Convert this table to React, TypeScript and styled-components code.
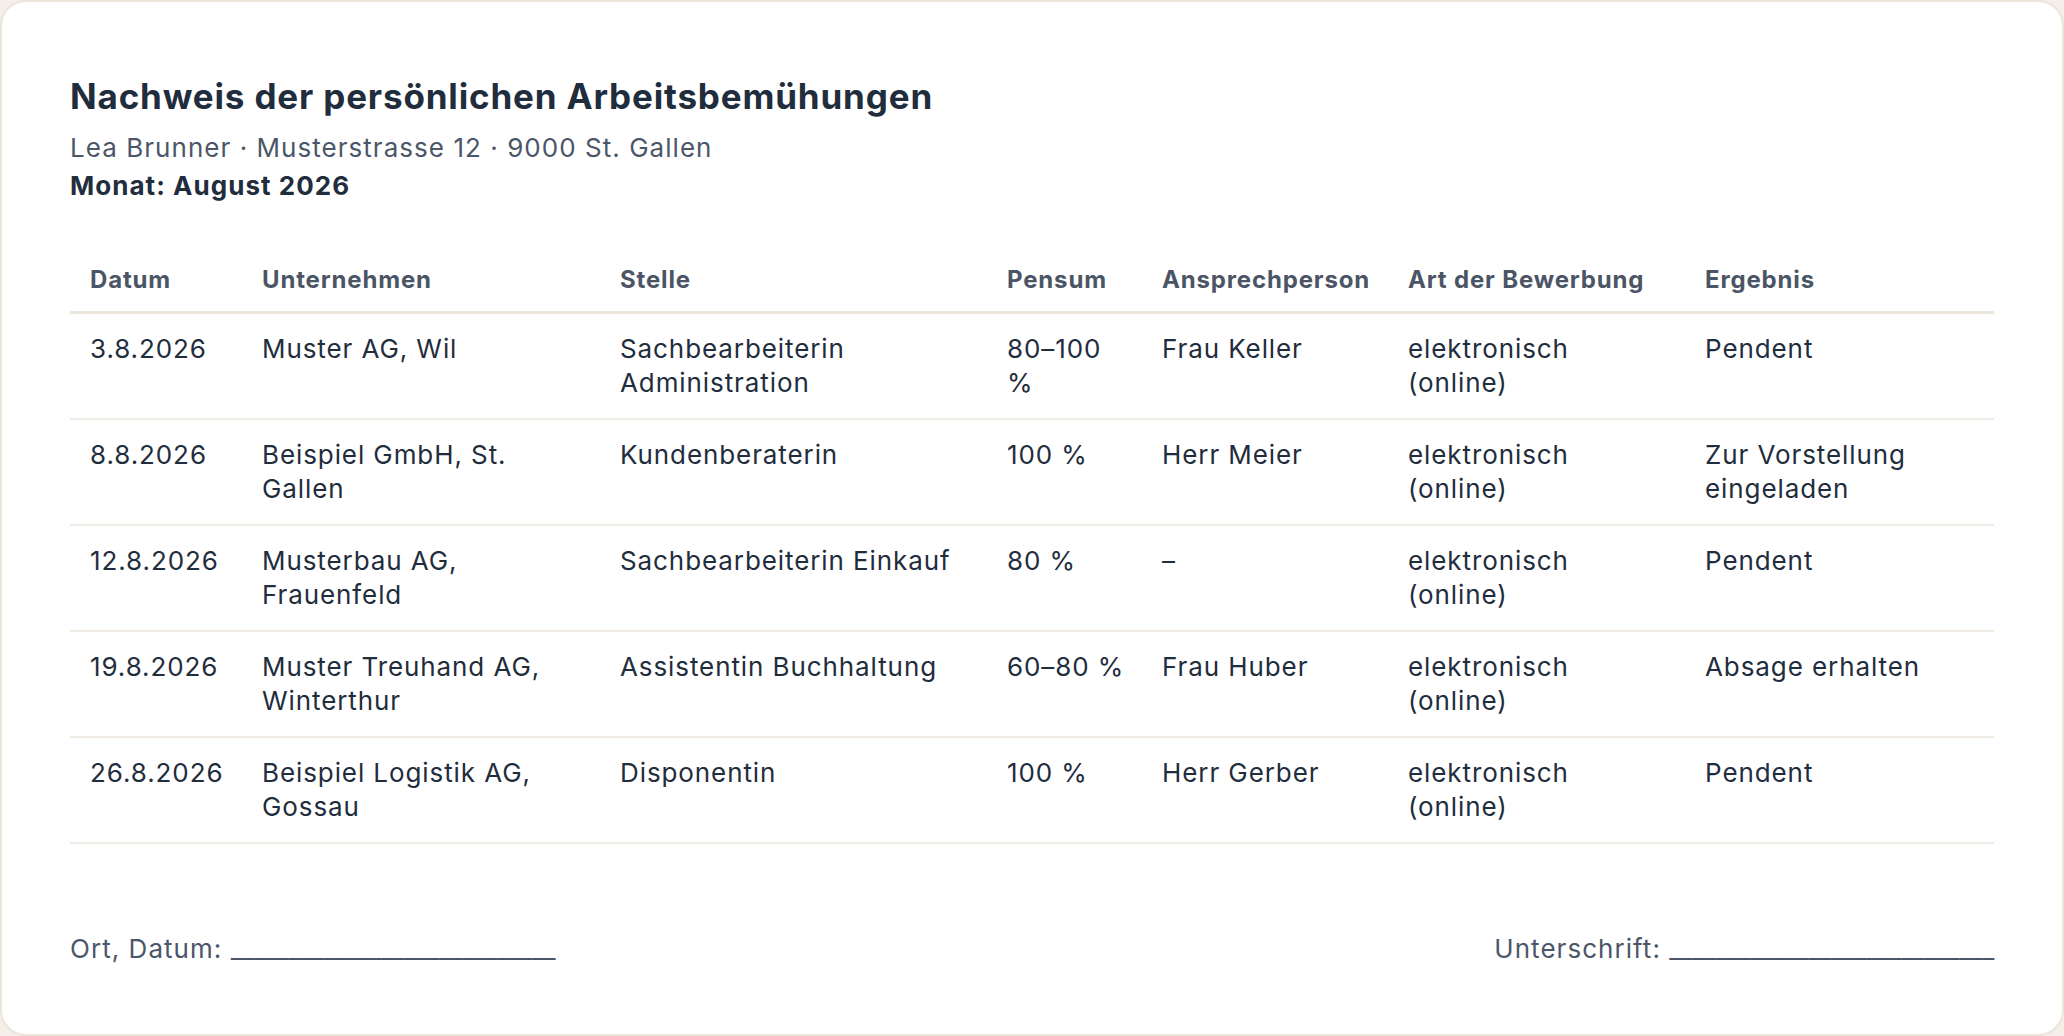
import React from "react";
import styled, { createGlobalStyle } from "styled-components";

const GlobalStyle = createGlobalStyle`
  html, body {
    margin: 0;
    padding: 0;
    background: #f4f0e9;
  }
  body {
    font-family: Inter, "Noto Sans", sans-serif;
    color: #1f2d3d;
    -webkit-font-smoothing: antialiased;
  }
  * { box-sizing: border-box; }
`;

const Card = styled.main`
  height: 1036px;
  background: #ffffff;
  border: 2px solid #ebe5da;
  border-radius: 26px;
  padding: 74px 68px 68px;
  display: flex;
  flex-direction: column;
`;

const Title = styled.h1`
  margin: 0;
  font-size: 35px;
  line-height: 40px;
  font-weight: 700;
  color: #1f2d3d;
  letter-spacing: 0.024em;
`;

const Meta = styled.p<{ $strong?: boolean }>`
  margin: ${(p) => (p.$strong ? "2px 0 0" : "14px 0 0")};
  font-size: 26px;
  line-height: 36px;
  letter-spacing: 0.04em;
  font-weight: ${(p) => (p.$strong ? 700 : 400)};
  color: ${(p) => (p.$strong ? "#1f2d3d" : "#4b5768")};
`;

const Table = styled.table`
  margin-top: 41px;
  width: 100%;
  border-collapse: collapse;
  table-layout: fixed;
`;

const HeadCell = styled.th<{ $tight?: boolean }>`
  text-align: left;
  padding: 18px ${(p) => (p.$tight ? "8px" : "20px")} 14px 20px;
  font-size: 24px;
  line-height: 34px;
  font-weight: 700;
  letter-spacing: 0.035em;
  color: #4b5565;
  white-space: nowrap;
  border-bottom: 3px solid #ece6dc;
`;

const Row = styled.tr`
  border-bottom: 2px solid #f1ece3;
`;

const Cell = styled.td<{ $tight?: boolean }>`
  padding: 18px ${(p) => (p.$tight ? "8px" : "20px")} 18px 20px;
  font-size: 26px;
  line-height: 34px;
  letter-spacing: 0.035em;
  font-weight: 400;
  color: #1f2d3d;
  vertical-align: top;
`;

const Footer = styled.footer`
  margin-top: auto;
  display: flex;
  justify-content: space-between;
  align-items: center;
`;

const SignLine = styled.span`
  font-size: 26px;
  line-height: 34px;
  letter-spacing: 0.04em;
  color: #4b5768;
`;

const Blank = styled.span`
  letter-spacing: -0.01em;
`;

const widths = [172, 358, 387, 155, 246, 297, 309];
const PENSUM = 3;
const headers = [
  "Datum",
  "Unternehmen",
  "Stelle",
  "Pensum",
  "Ansprechperson",
  "Art der Bewerbung",
  "Ergebnis",
];

const rows: string[][] = [
  ["3.8.2026", "Muster AG, Wil", "Sachbearbeiterin Administration", "80–100 %", "Frau Keller", "elektronisch (online)", "Pendent"],
  ["8.8.2026", "Beispiel GmbH, St. Gallen", "Kundenberaterin", "100 %", "Herr Meier", "elektronisch (online)", "Zur Vorstellung eingeladen"],
  ["12.8.2026", "Musterbau AG, Frauenfeld", "Sachbearbeiterin Einkauf", "80 %", "–", "elektronisch (online)", "Pendent"],
  ["19.8.2026", "Muster Treuhand AG, Winterthur", "Assistentin Buchhaltung", "60–80 %", "Frau Huber", "elektronisch (online)", "Absage erhalten"],
  ["26.8.2026", "Beispiel Logistik AG, Gossau", "Disponentin", "100 %", "Herr Gerber", "elektronisch (online)", "Pendent"],
];

const blank = "____________________________";

export default function App() {
  return (
    <>
      <GlobalStyle />
      <Card>
        <Title>Nachweis der persönlichen Arbeitsbemühungen</Title>
        <Meta>Lea Brunner · Musterstrasse 12 · 9000 St. Gallen</Meta>
        <Meta $strong>Monat: August 2026</Meta>
        <Table>
          <colgroup>
            {widths.map((w, i) => (
              <col key={i} style={{ width: w }} />
            ))}
          </colgroup>
          <thead>
            <tr>
              {headers.map((h, j) => (
                <HeadCell key={h} $tight={j === PENSUM}>
                  {h}
                </HeadCell>
              ))}
            </tr>
          </thead>
          <tbody>
            {rows.map((r, i) => (
              <Row key={i}>
                {r.map((c, j) => (
                  <Cell key={j} $tight={j === PENSUM}>
                    {c}
                  </Cell>
                ))}
              </Row>
            ))}
          </tbody>
        </Table>
        <Footer>
          <SignLine>
            Ort, Datum: <Blank>{blank}</Blank>
          </SignLine>
          <SignLine>
            Unterschrift: <Blank>{blank}</Blank>
          </SignLine>
        </Footer>
      </Card>
    </>
  );
}
